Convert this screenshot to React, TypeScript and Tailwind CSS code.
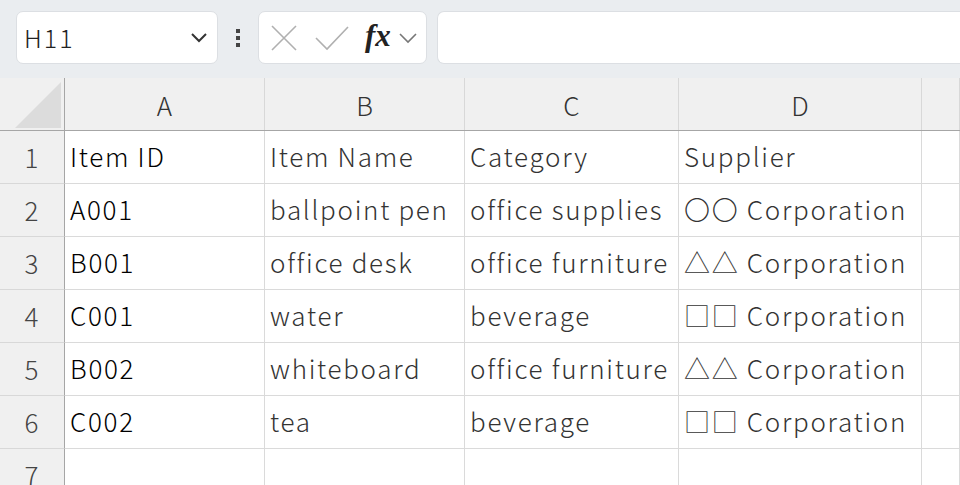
import React from "react";

const cols = ["A", "B", "C", "D", ""];
const widths = ["w-[200px]", "w-[200px]", "w-[214px]", "w-[243px]", "flex-1"];
const rows: string[][] = [
  ["Item ID", "Item Name", "Category", "Supplier"],
  ["A001", "ballpoint pen", "office supplies", "〇〇 Corporation"],
  ["B001", "office desk", "office furniture", "△△ Corporation"],
  ["C001", "water", "beverage", "□□ Corporation"],
  ["B002", "whiteboard", "office furniture", "△△ Corporation"],
  ["C002", "tea", "beverage", "□□ Corporation"],
  ["", "", "", ""],
];

const font = { fontFamily: '"Noto Sans CJK JP", "Noto Sans", sans-serif' };

export default function App() {
  return (
    <div className="w-[960px] h-[485px] overflow-hidden bg-white" style={font}>
      {/* toolbar */}
      <div className="h-[78px] bg-[#eaedf0] flex items-start pt-[11px] pl-[16px]">
        <div className="w-[202px] h-[53px] bg-white rounded-[7px] border border-[#dcdfe3] flex items-center pl-[7px] pr-[8px]">
          <span className="text-[25px] font-light tracking-[2px] text-[#222] flex-1 leading-none">H11</span>
          <svg width="18" height="12" viewBox="0 0 18 12" className="mr-[1px]">
            <path d="M2 2 L9 9 L16 2" fill="none" stroke="#333" strokeWidth="2" />
          </svg>
        </div>
        <div className="w-[40px] h-[53px] flex flex-col items-center justify-center gap-[3px]">
          <div className="w-[4px] h-[4px] bg-[#444]" />
          <div className="w-[4px] h-[4px] bg-[#444]" />
          <div className="w-[4px] h-[4px] bg-[#444]" />
        </div>
        <div className="w-[169px] h-[53px] bg-white rounded-[7px] border border-[#dcdfe3] flex items-center pl-[12px]">
          <svg width="26" height="26" viewBox="0 0 26 26">
            <path d="M1 1 L25 25 M25 1 L1 25" stroke="#b0b0b0" strokeWidth="1.6" fill="none" />
          </svg>
          <svg width="34" height="26" viewBox="0 0 34 26" className="ml-[18px]">
            <path d="M1 13 L12 24 L33 2" stroke="#b0b0b0" strokeWidth="1.6" fill="none" />
          </svg>
          <span
            className="ml-[16px] text-[31px] italic font-bold text-[#222] leading-none -mt-[4px]"
            style={{ fontFamily: '"Liberation Serif", "DejaVu Serif", serif' }}
          >
            fx
          </span>
          <svg width="18" height="12" viewBox="0 0 18 12" className="ml-[8px]">
            <path d="M1 2 L9 10 L17 2" fill="none" stroke="#777" strokeWidth="1.6" />
          </svg>
        </div>
        <div className="flex-1 h-[53px] ml-[10px] bg-white rounded-l-[7px] border border-r-0 border-[#dcdfe3]" />
      </div>

      {/* column header */}
      <div className="flex h-[53px] bg-[#f0f0f0] border-b border-[#a6a6a6]">
        <div className="w-[65px] shrink-0 border-r border-[#a6a6a6] relative">
          <svg width="46" height="46" viewBox="0 0 46 46" className="absolute left-[15px] top-[4px]">
            <path d="M46 0 L46 46 L0 46 Z" fill="#dcdcdc" />
          </svg>
        </div>
        {cols.map((c, i) => (
          <div
            key={i}
            className={`${widths[i]} shrink-0 border-r border-[#d8d8d8] flex items-center justify-center text-[26px] font-light text-[#333]`}
          >
            {c}
          </div>
        ))}
      </div>

      {/* rows */}
      {rows.map((r, ri) => (
        <div key={ri} className="flex h-[53px]">
          <div className="w-[65px] shrink-0 bg-[#f0f0f0] border-r border-[#a6a6a6] border-b border-b-[#d8d8d8] flex items-center justify-center text-[26px] font-light text-[#444] pr-[1px] pb-[2px]">
            {ri + 1}
          </div>
          {[...r, ""].map((v, ci) => (
            <div
              key={ci}
              className={`${widths[ci]} shrink-0 border-r border-b border-[#dadada] flex items-center pl-[5px] pb-[3px] text-[26px] font-light tracking-[1.7px] whitespace-nowrap overflow-hidden ${
                ci === 0 ? "text-black" : "text-[#333]"
              }`}
            >
              {v}
            </div>
          ))}
        </div>
      ))}
    </div>
  );
}
